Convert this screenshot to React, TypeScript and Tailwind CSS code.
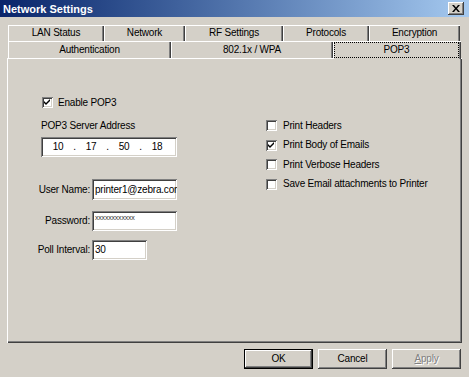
import React from 'react';

const raised =
  'shadow-[inset_-1px_-1px_#404040,inset_1px_1px_#ffffff,inset_-2px_-2px_#808080,inset_2px_2px_#d4d0c8]';
const sunken =
  'shadow-[inset_1px_1px_#808080,inset_-1px_-1px_#ffffff,inset_2px_2px_#404040,inset_-2px_-2px_#d4d0c8]';

function Check({ checked }: { checked?: boolean }) {
  return (
    <span className={`flex h-[11px] w-[11px] shrink-0 items-center justify-center bg-white ${sunken}`}>
      {checked && (
        <svg width="7" height="7" viewBox="0 0 7 7">
          <path d="M0 2 L2 4 L6 0 L6 2 L2 6 L0 4 Z" fill="#000" />
        </svg>
      )}
    </span>
  );
}

function Tab({ label, w }: { label: string; w: string }) {
  return (
    <div
      className={`flex h-full items-center justify-center ${w} shadow-[inset_1px_1px_#ffffff,inset_-1px_0_#404040,inset_-2px_0_#808080]`}
    >
      {label}
    </div>
  );
}

function Field({ label, w, children }: { label: string; w: string; children?: React.ReactNode }) {
  return (
    <div className="flex h-full items-center">
      <span className="w-[59px] shrink-0 text-right">{label}</span>
      <div className={`ml-[2px] flex h-full items-center overflow-hidden whitespace-nowrap bg-white pl-[3px] ${w} ${sunken}`}>
        {children}
      </div>
    </div>
  );
}

function Button({ children, def }: { children: React.ReactNode; def?: boolean }) {
  return (
    <div
      className={`flex h-[20px] w-[69px] items-center justify-center ${
        def
          ? 'shadow-[inset_0_0_0_1px_#000000,inset_-2px_-2px_#404040,inset_2px_2px_#ffffff,inset_-3px_-3px_#808080]'
          : raised
      }`}
    >
      {children}
    </div>
  );
}

export default function App() {
  const opts = [
    { label: 'Print Headers', on: false },
    { label: 'Print Body of Emails', on: true },
    { label: 'Print Verbose Headers', on: false },
    { label: 'Save Email attachments to Printer', on: false },
  ];

  return (
    <div
      className="h-[377px] w-[469px] overflow-hidden bg-[#d4d0c8] text-[10px] leading-[12px] tracking-[-0.2px] text-black"
      style={{ fontFamily: '"Liberation Sans", Arial, sans-serif' }}
    >
      <div className="flex h-[17px] items-center justify-between bg-gradient-to-r from-[#0a246a] to-[#a6caf0] pl-[3px] pr-[5px]">
        <span className="text-[11px] font-bold tracking-normal text-white">Network Settings</span>
        <div className={`flex h-[13px] w-[16px] items-center justify-center bg-[#d4d0c8] ${raised}`}>
          <svg width="8" height="7" viewBox="0 0 8 7">
            <path d="M0 0h2l2 2.5L6 0h2L5 3.5 8 7H6L4 4.5 2 7H0l3-3.5z" fill="#000" />
          </svg>
        </div>
      </div>

      <div className="pt-[8px]">
        <div className="flex h-[16px] pl-[8px]">
          <Tab label="LAN Status" w="w-[96px]" />
          <Tab label="Network" w="w-[81px]" />
          <Tab label="RF Settings" w="w-[98px]" />
          <Tab label="Protocols" w="w-[86px]" />
          <Tab label="Encryption" w="w-[91px]" />
        </div>
        <div className="flex h-[17px] pl-[8px]">
          <Tab label="Authentication" w="w-[163px]" />
          <Tab label="802.1x / WPA" w="w-[162px]" />
          <div className="relative z-10 -mb-[1px] flex h-[18px] w-[128px] bg-[#d4d0c8] p-[2px] shadow-[inset_1px_1px_#ffffff,inset_-1px_0_#404040,inset_-2px_0_#808080]">
            <div className="flex h-[14px] w-[123px] items-center justify-center outline-1 outline-dotted outline-black">
              POP3
            </div>
          </div>
        </div>

        <div className="ml-[7px] flex h-[285px] w-[455px] shadow-[inset_1px_1px_#ffffff,inset_-1px_-1px_#404040,inset_-2px_-2px_#808080]">
          <div className="flex w-[259px] shrink-0 flex-col pl-[24px] pt-[38px]">
            <div className="flex h-[13px] items-center gap-[5px] pl-[11px]">
              <Check checked />
              <span>Enable POP3</span>
            </div>
            <div className="mt-[11px] h-[12px] pl-[10px]">POP3 Server Address</div>
            <div className={`ml-[10px] mt-[5px] flex h-[20px] w-[136px] items-center bg-white pl-[4px] ${sunken}`}>
              {['10', '17', '50', '18'].map((n, i) => (
                <React.Fragment key={i}>
                  {i > 0 && <span className="w-[7px] text-center">.</span>}
                  <span className="w-[26px] text-center">{n}</span>
                </React.Fragment>
              ))}
            </div>
            <div className="mt-[22px] h-[21px]">
              <Field label="User Name:" w="w-[85px]">
                printer1@zebra.com
              </Field>
            </div>
            <div className="mt-[11px] h-[20px]">
              <Field label="Password:" w="w-[85px]">
                <span className="self-start pt-[3px] text-[7px] leading-[7px] text-[#333]">xxxxxxxxxxxx</span>
              </Field>
            </div>
            <div className="mt-[9px] h-[20px]">
              <Field label="Poll Interval:" w="w-[55px]">
                30
              </Field>
            </div>
          </div>

          <div className="flex flex-col pt-[58px]">
            {opts.map((o) => (
              <div key={o.label} className="flex h-[19.5px] items-center gap-[6px]">
                <Check checked={o.on} />
                <span>{o.label}</span>
              </div>
            ))}
          </div>
        </div>

        <div className="mt-[6px] flex justify-end gap-[5px] pr-[8px]">
          <Button def>OK</Button>
          <Button>Cancel</Button>
          <Button>
            <span className="text-[#808080] [text-shadow:1px_1px_#ffffff]">
              <span className="underline">A</span>pply
            </span>
          </Button>
        </div>
      </div>
    </div>
  );
}
